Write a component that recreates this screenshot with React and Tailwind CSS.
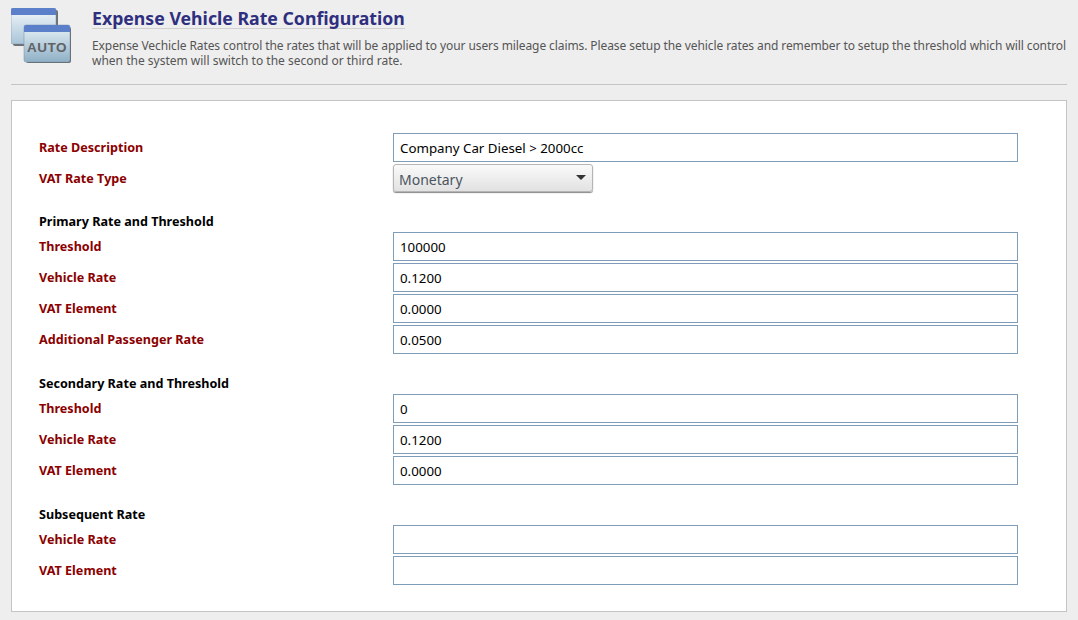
const SECTIONS = [
  {
    title: 'Primary Rate and Threshold',
    rows: [
      { label: 'Threshold', value: '100000' },
      { label: 'Vehicle Rate', value: '0.1200' },
      { label: 'VAT Element', value: '0.0000' },
      { label: 'Additional Passenger Rate', value: '0.0500' },
    ],
  },
  {
    title: 'Secondary Rate and Threshold',
    rows: [
      { label: 'Threshold', value: '0' },
      { label: 'Vehicle Rate', value: '0.1200' },
      { label: 'VAT Element', value: '0.0000' },
    ],
  },
  {
    title: 'Subsequent Rate',
    rows: [
      { label: 'Vehicle Rate', value: '' },
      { label: 'VAT Element', value: '' },
    ],
  },
]

function AutoIcon() {
  return (
    <svg width="62" height="56" viewBox="0 0 62 56" className="shrink-0">
      <defs>
        <linearGradient id="paneBack" x1="0" y1="0" x2="0" y2="1">
          <stop offset="0" stopColor="#f2f8fb" />
          <stop offset="1" stopColor="#a9c4d8" />
        </linearGradient>
        <linearGradient id="paneFront" x1="0" y1="0" x2="0" y2="1">
          <stop offset="0" stopColor="#e8f2f7" />
          <stop offset="1" stopColor="#8fb0c6" />
        </linearGradient>
      </defs>
      <rect x="2" y="2" width="45" height="36" rx="2" fill="#6d6f72" />
      <rect x="0" y="0" width="45" height="36" rx="2" fill="url(#paneBack)" stroke="#7b8ea6" strokeWidth="0.5" />
      <path d="M0 7V2a2 2 0 0 1 2-2h41a2 2 0 0 1 2 2v5z" fill="#5b7fc9" />
      <rect x="15" y="19" width="45" height="36" rx="2" fill="#66686b" />
      <rect x="13" y="17" width="46" height="37" rx="2" fill="url(#paneFront)" stroke="#7b8ea6" strokeWidth="0.5" />
      <path d="M13 24v-5a2 2 0 0 1 2-2h42a2 2 0 0 1 2 2v5z" fill="#5b7fc9" />
      <text x="36" y="44" textAnchor="middle" fontSize="13.5" fontWeight="700" letterSpacing="0.5" fill="#5f6266" fontFamily="'Liberation Sans', sans-serif">AUTO</text>
    </svg>
  )
}

function Row({ label, children }) {
  return (
    <div className="flex items-start">
      <label className="w-[354px] shrink-0 pt-[7px] text-[#8b0000] font-bold text-[12.6px] leading-[16px]">{label}</label>
      {children}
    </div>
  )
}

function TextRow({ label, value }) {
  return (
    <Row label={label}>
      <input
        readOnly
        value={value}
        className="w-[625px] h-[29px] bg-white border border-[#7f9db9] px-[6px] text-[13.3px] text-black outline-none"
      />
    </Row>
  )
}

export default function App() {
  return (
    <div className="w-[1078px] h-[620px] overflow-hidden bg-[#eeeeee] font-['Noto_Sans','Open_Sans',sans-serif]">
      <div className="mx-[11px] h-[85px] border-b border-[#c4c4c4] flex items-start pt-[8px]">
        <AutoIcon />
        <div className="ml-[19px] -mt-[1px] min-w-0">
          <h1 className="inline-block border-b border-[#d0d0d0] text-[17.7px] leading-[20px] font-bold text-[#2f2f7f]">
            Expense Vehicle Rate Configuration
          </h1>
          <p className="mt-[7px] text-[12px] leading-[15px] text-[#555555] whitespace-nowrap">
            <span className="tracking-[-0.09px]">Expense Vechicle Rates control the rates that will be applied to your users mileage claims. Please setup the vehicle rates and remember to setup the threshold which will control</span>
            <br />
            when the system will switch to the second or third rate.
          </p>
        </div>
      </div>

      <div className="mx-[11px] mt-[15px] h-[512px] bg-white border border-[#c4c4c4] pl-[27px] pt-[32px]">
        <div className="flex flex-col gap-[2px]">
          <TextRow label="Rate Description" value="Company Car Diesel > 2000cc" />
          <Row label="VAT Rate Type">
            <div className="w-[200px] h-[28px] flex items-center justify-between pl-[5px] pr-[6px] pt-[2px] border border-[#b5b5b5] rounded-[3px] shadow-[0_1px_1px_#888888] bg-gradient-to-b from-[#fafafa] to-[#e2e2e2] text-[14px] text-[#4a5560]">
              <span>Monetary</span>
              <span className="mb-[4px] w-0 h-0 border-x-[5px] border-x-transparent border-t-[5px] border-t-[#333333]" />
            </div>
          </Row>
        </div>

        {SECTIONS.map(s => (
          <div key={s.title} className="mt-[22px]">
            <h2 className="h-[18px] text-[12.6px] leading-[16px] font-bold text-black">{s.title}</h2>
            <div className="flex flex-col gap-[2px]">
              {s.rows.map(r => (
                <TextRow key={r.label} label={r.label} value={r.value} />
              ))}
            </div>
          </div>
        ))}
      </div>
    </div>
  )
}
